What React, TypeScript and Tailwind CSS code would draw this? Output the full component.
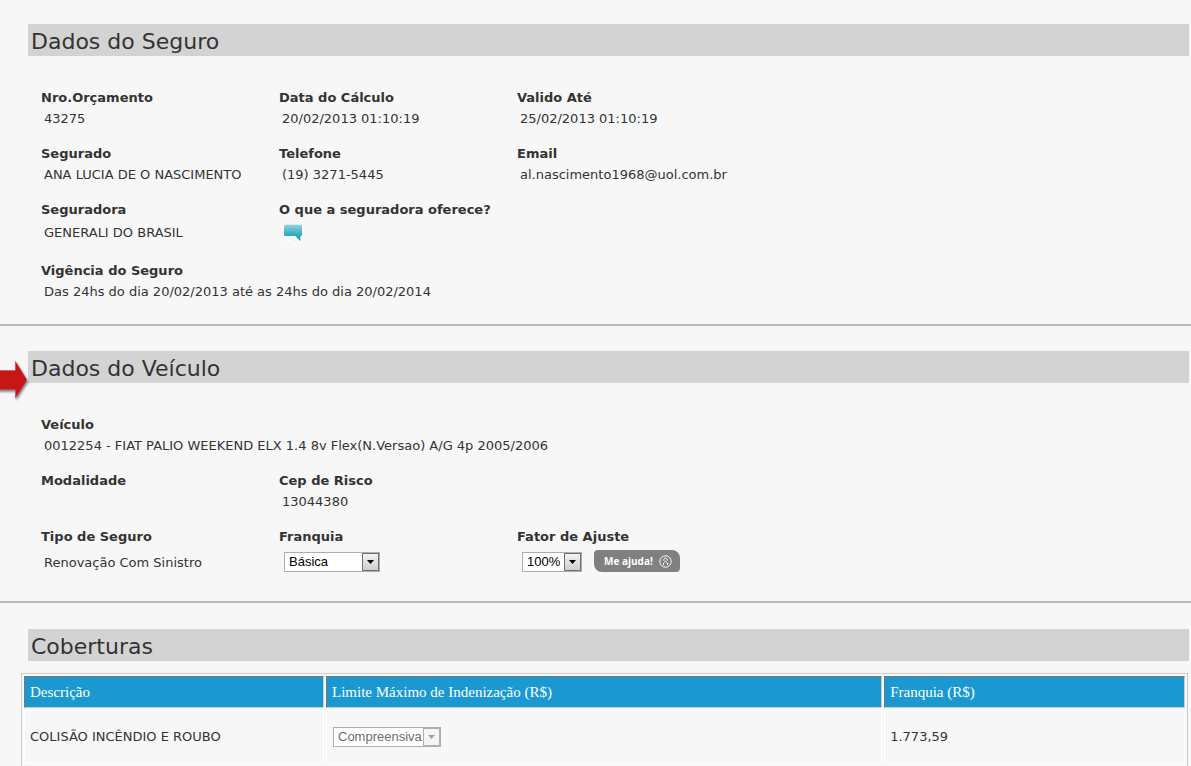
import React from "react";

function Heading({ children }: { children: string }) {
  return (
    <h2 className="ml-7 mr-0.5 h-8 bg-[#d3d3d3] pl-[3px] text-[22px] leading-[35px] text-[#333]">{children}</h2>
  );
}

function Field({ label, value, className = "" }: { label: string; value?: string; className?: string }) {
  return (
    <div className={className}>
      <dt className="h-5 font-bold leading-5">{label}</dt>
      <dd className="h-[22px] pl-[3px] leading-[22px]">{value}</dd>
    </div>
  );
}

function Select({
  id,
  value,
  label,
  className,
  disabled = false,
}: {
  id: string;
  value: string;
  label?: string;
  className: string;
  disabled?: boolean;
}) {
  return (
    <span className={`relative inline-flex h-5 ${className}`}>
      <select
        id={id}
        aria-label={label}
        disabled={disabled}
        className="h-5 w-full appearance-none border border-[#abadb3] bg-white pl-1 font-['Liberation_Sans',sans-serif] text-[13px] leading-[18px] text-black opacity-100 disabled:text-[#6d6d6d]"
      >
        <option>{value}</option>
      </select>
      <span
        className={`pointer-events-none absolute right-px top-px flex h-[18px] w-[17px] items-center justify-center border ${disabled ? "border-[#adb2b5] bg-[#f4f4f4]" : "border-[#707070] bg-linear-to-b from-[#f2f2f2] to-[#cfcfcf]"}`}
      >
        <svg width="7" height="4" viewBox="0 0 7 4" className={disabled ? "fill-[#a0a0a0]" : "fill-black"}>
          <path d="M0 0H7L3.5 4Z" />
        </svg>
      </span>
    </span>
  );
}

function Bubble() {
  return (
    <svg width="22" height="19" viewBox="0 0 22 19" className="block">
      <defs>
        <linearGradient id="bubble" x1="0" y1="0" x2="0" y2="1">
          <stop offset="0" stopColor="#97cfdb" />
          <stop offset=".7" stopColor="#24a7be" />
          <stop offset="1" stopColor="#1596ae" />
        </linearGradient>
      </defs>
      <path d="M0 17.5Q9 14 20 17.5Z" fill="#fff" />
      <path d="M5 16.8Q11 15.6 17 16.8Z" fill="#dcdcdc" />
      <path d="M2.5 .7H17.5Q19 .7 19 2.2V10.5Q19 12 17.5 12Q16.8 14.5 18 17Q15 15.5 12.5 12H2.5Q1 12 1 10.5V2.2Q1 .7 2.5 .7Z" fill="url(#bubble)" />
    </svg>
  );
}

function Arrow() {
  return (
    <svg width="32" height="46" viewBox="0 0 32 46" className="absolute left-0 top-[33px]">
      <defs>
        <filter id="arrow-shadow" x="-20%" y="-20%" width="150%" height="150%">
          <feDropShadow dx="1" dy="2" stdDeviation="1" floodColor="#333" floodOpacity=".6" />
        </filter>
      </defs>
      <path
        d="M-4 11.5H15.5V2.5L27 21L15.5 39V30.5H-4Z"
        fill="#c81414"
        stroke="#b05050"
        strokeWidth=".6"
        filter="url(#arrow-shadow)"
      />
    </svg>
  );
}

const headCell =
  "h-8 border border-t-[#777] border-l-[#777] border-r-[#ccc] border-b-[#ccc] bg-[#1b98d0] px-[5px] text-left font-['Liberation_Serif',serif] text-[15px] font-normal text-white";
const bodyCell = "h-[54px] border border-white px-[5px] text-left";

export default function App() {
  return (
    <main className="min-h-screen bg-[#f7f7f7] pt-6 font-['DejaVu_Sans',sans-serif] text-[13px] text-[#333]">
      <section className="border-b-2 border-[#bfbbae] pb-[21px]">
        <Heading>Dados do Seguro</Heading>
        <dl className="ml-[41px] mt-8 grid grid-cols-[238px_238px_1fr] gap-y-3.5">
          <Field label="Nro.Orçamento" value="43275" />
          <Field label="Data do Cálculo" value="20/02/2013 01:10:19" />
          <Field label="Valido Até" value="25/02/2013 01:10:19" />
          <Field label="Segurado" value="ANA LUCIA DE O NASCIMENTO" />
          <Field label="Telefone" value="(19) 3271-5445" />
          <Field label="Email" value="al.nascimento1968@uol.com.br" />
          <div>
            <dt className="font-bold leading-5">Seguradora</dt>
            <dd className="pl-[3px] leading-[25px]">GENERALI DO BRASIL</dd>
          </div>
          <div className="h-[47px]">
            <dt className="font-bold leading-5">O que a seguradora oferece?</dt>
            <dd className="pl-1 pt-1">
              <button type="button" aria-label="O que a seguradora oferece?" className="block">
                <Bubble />
              </button>
            </dd>
          </div>
          <Field className="col-span-3 col-start-1" label="Vigência do Seguro" value="Das 24hs do dia 20/02/2013 até as 24hs do dia 20/02/2014" />
        </dl>
      </section>

      <section className="relative border-b-2 border-[#bfbbae] pb-6 pt-[25px]">
        <Arrow />
        <Heading>Dados do Veículo</Heading>
        <dl className="ml-[41px] mt-8 grid grid-cols-[238px_238px_1fr] gap-y-3.5">
          <Field className="col-span-3" label="Veículo" value="0012254 - FIAT PALIO WEEKEND ELX 1.4 8v Flex(N.Versao) A/G 4p 2005/2006" />
          <Field label="Modalidade" />
          <Field className="col-span-2" label="Cep de Risco" value="13044380" />
          <div className="h-[50px]">
            <dt className="font-bold leading-5">Tipo de Seguro</dt>
            <dd className="pl-[3px] leading-8">Renovação Com Sinistro</dd>
          </div>
          <div className="h-[50px]">
            <dt className="font-bold leading-5">
              <label htmlFor="franquia">Franquia</label>
            </dt>
            <dd className="flex pl-[5px] pt-[5px]">
              <Select id="franquia" value="Básica" className="w-24" />
            </dd>
          </div>
          <div className="h-[50px]">
            <dt className="font-bold leading-5">
              <label htmlFor="fator">Fator de Ajuste</label>
            </dt>
            <dd className="flex items-start gap-3 pl-[5px] pt-[3px]">
              <Select id="fator" value="100%" className="mt-0.5 w-[60px]" />
              <button
                type="button"
                className="flex h-[22px] w-[86px] items-center justify-between rounded-tl-sm rounded-tr-lg rounded-br-sm rounded-bl-lg bg-[#808080] pl-2.5 pr-2 font-['Open_Sans',sans-serif] text-[10px] font-bold text-white"
              >
                Me ajuda!
                <svg width="13" height="13" viewBox="0 0 13 13" fill="none" stroke="currentColor">
                  <circle cx="6.5" cy="6.5" r="5.7" />
                  <path d="M4.8 5.6V4.4L6.5 2.8L8.2 4.4V5.6M4.5 10V8L6.5 6.2L8.5 8V10" />
                </svg>
              </button>
            </dd>
          </div>
        </dl>
      </section>

      <section className="pt-[26px]">
        <Heading>Coberturas</Heading>
        <table className="ml-[21px] mt-3 w-[calc(100%-24px)] table-fixed border-separate border-spacing-0.5 border border-[#ccc]">
          <colgroup>
            <col className="w-[300px]" />
            <col />
            <col className="w-[26%]" />
          </colgroup>
          <thead>
            <tr>
              <th className={headCell}>Descrição</th>
              <th className={headCell}>Limite Máximo de Indenização (R$)</th>
              <th className={headCell}>Franquia (R$)</th>
            </tr>
          </thead>
          <tbody>
            <tr>
              <td className={bodyCell}>COLISÃO INCÊNDIO E ROUBO</td>
              <td className={bodyCell}>
                <span className="flex pl-px">
                  <Select
                    id="limite"
                    label="Limite Máximo de Indenização"
                    value="Compreensiva"
                    className="w-[108px]"
                    disabled
                  />
                </span>
              </td>
              <td className={bodyCell}>1.773,59</td>
            </tr>
          </tbody>
        </table>
      </section>
    </main>
  );
}
